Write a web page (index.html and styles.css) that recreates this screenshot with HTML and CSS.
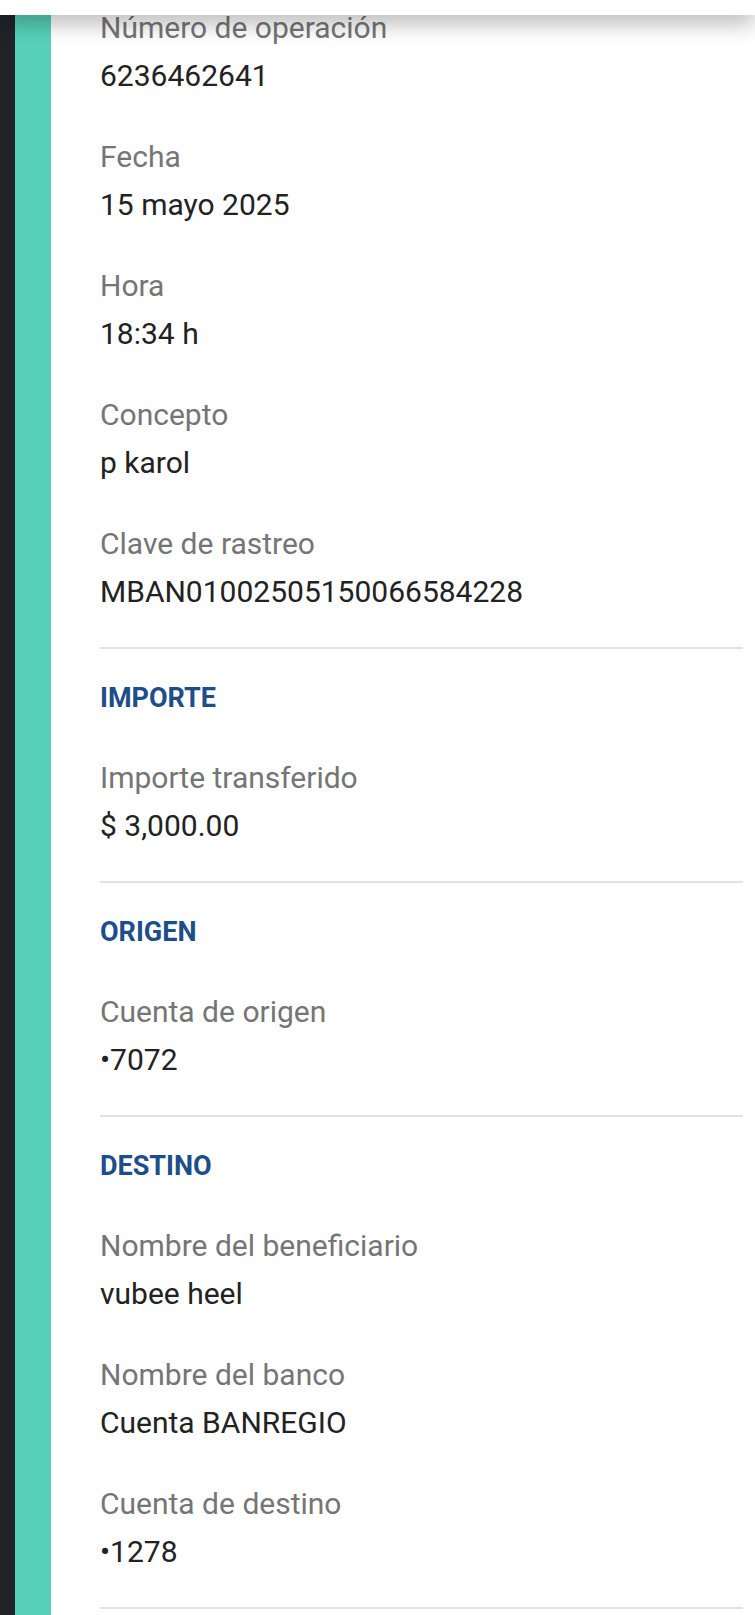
FILE: index.html
```html
<!DOCTYPE html>
<html lang="es">
<head>
    <meta charset="UTF-8">
    <meta name="viewport" content="width=device-width, initial-scale=1.0">
    <title>Detalle de la operación</title>
    <link rel="stylesheet" href="styles.css">
</head>
<body>

<!-- Barra superior -->
<div class="topbar"></div>

<div class="page">
    <div class="rail-dark"></div>
    <div class="rail-teal"></div>

    <div class="content">
        <!-- Datos de la operación -->
        <div class="section">
            <div class="field">
                <div class="label">Número de operación</div>
                <div class="value">6236462641</div>
            </div>
            <div class="field">
                <div class="label">Fecha</div>
                <div class="value">15 mayo 2025</div>
            </div>
            <div class="field">
                <div class="label">Hora</div>
                <div class="value">18:34 h</div>
            </div>
            <div class="field">
                <div class="label">Concepto</div>
                <div class="value">p karol</div>
            </div>
            <div class="field">
                <div class="label">Clave de rastreo</div>
                <div class="value">MBAN01002505150066584228</div>
            </div>
        </div>
        <hr class="divider">

        <div class="section">
            <h2 class="section-title">IMPORTE</h2>
            <div class="field">
                <div class="label">Importe transferido</div>
                <div class="value">$ 3,000.00</div>
            </div>
        </div>
        <hr class="divider">

        <div class="section">
            <h2 class="section-title">ORIGEN</h2>
            <div class="field">
                <div class="label">Cuenta de origen</div>
                <div class="value">•7072</div>
            </div>
        </div>
        <hr class="divider">

        <div class="section">
            <h2 class="section-title">DESTINO</h2>
            <div class="field">
                <div class="label">Nombre del beneficiario</div>
                <div class="value">vubee heel</div>
            </div>
            <div class="field">
                <div class="label">Nombre del banco</div>
                <div class="value">Cuenta BANREGIO</div>
            </div>
            <div class="field">
                <div class="label">Cuenta de destino</div>
                <div class="value">•1278</div>
            </div>
        </div>
        <hr class="divider">
    </div>
</div>

</body>
</html>
```

FILE: styles.css
```css
body {
    margin: 0;
    font-family: Roboto, "Liberation Sans", Arial, sans-serif;
    background-color: #ffffff;
}
.topbar {
    position: fixed;
    top: 0;
    left: 0;
    right: 0;
    height: 15px;
    background-color: #ffffff;
    box-shadow: 0 4px 24px rgba(0, 0, 0, 0.45);
    z-index: 10;
}
.page {
    display: flex;
    min-height: 100vh;
}
.rail-dark {
    width: 15px;
    background-color: #222327;
}
.rail-teal {
    width: 36px;
    background-color: #56d1b8;
}
.content {
    flex: 1;
    padding: 4px 12px 0 49px;
}
.section {
    display: flex;
    flex-direction: column;
    gap: 33px;
}
.label, .value {
    font-size: 30px;
    line-height: 48px;
}
.label {
    color: #757575;
}
.value {
    color: #222222;
}
.section-title {
    margin: 29px 0 3px 0;
    font-size: 27px;
    line-height: 40px;
    font-weight: 700;
    color: #1d4e89;
}
.divider {
    margin: 31px 0 0 0;
    border: none;
    height: 2px;
    background-color: #e3e3e3;
}
```
